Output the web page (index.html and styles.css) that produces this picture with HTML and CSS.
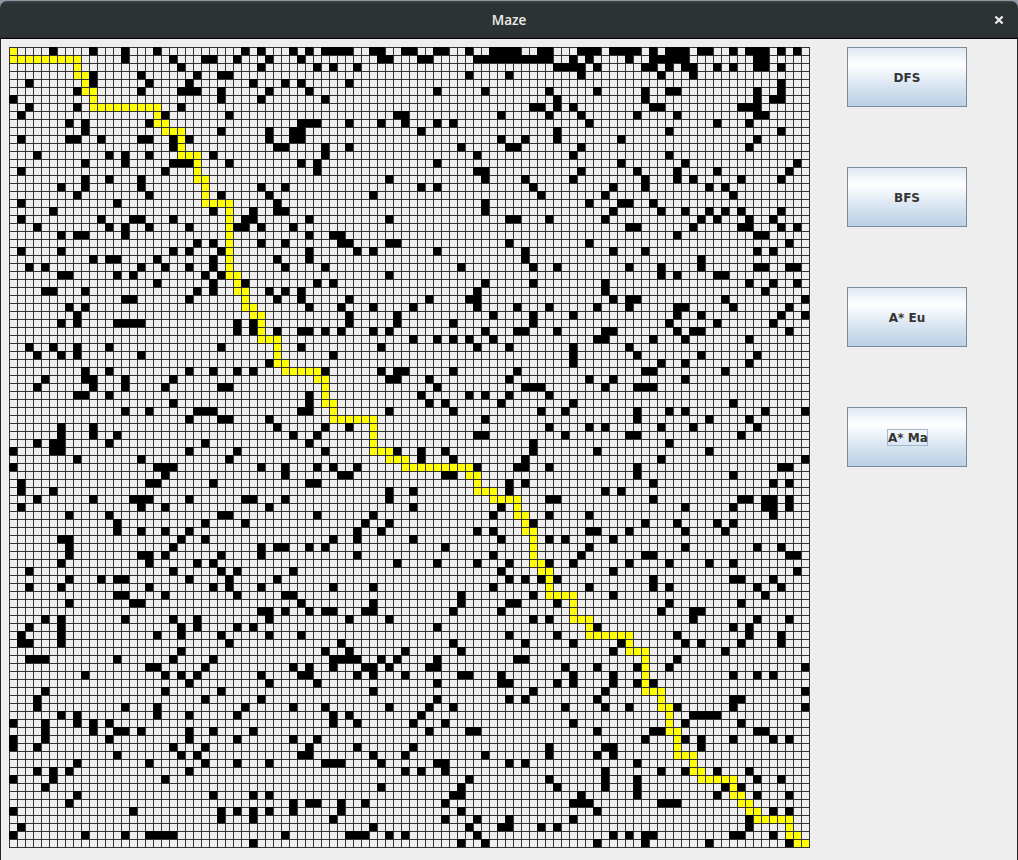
FILE: index.html
```html
<!DOCTYPE html>
<html lang="en">
<head>
<meta charset="utf-8">
<title>Maze</title>
<link rel="stylesheet" href="styles.css">
</head>
<body>
<div class="window">
  <header class="titlebar">
    <h1 class="title">Maze</h1>
    <button class="close" aria-label="Close">
      <svg width="10" height="10" viewBox="0 0 10 10"><path d="M1.4 1.4 8.6 8.6M8.6 1.4 1.4 8.6"/></svg>
    </button>
  </header>
  <main class="content">
    <svg class="maze" width="801" height="801" viewBox="0 0 801 801" shape-rendering="crispEdges">
      <path class="lines" id="lines"/>
      <path class="walls" id="walls"/>
      <path class="route" id="route"/>
    </svg>
    <div class="actions">
      <button class="btn"><span class="label">DFS</span></button>
      <button class="btn"><span class="label">BFS</span></button>
      <button class="btn"><span class="label">A* Eu</span></button>
      <button class="btn"><span class="label focused">A* Ma</span></button>
    </div>
  </main>
</div>
<script src="maze.js"></script>
</body>
</html>
```
FILE: styles.css
```css
body {
  margin: 0;
  background: #8f96a1;
  overflow: hidden;
}
.window {
  display: flex;
  flex-direction: column;
  box-sizing: border-box;
  width: 1018px;
  height: 860px;
  padding-top: 1px;
}
.titlebar {
  display: grid;
  grid-template-columns: 38px 1fr 38px;
  align-items: center;
  box-sizing: border-box;
  height: 38px;
  border-bottom: 1px solid #060404;
  border-radius: 7px 7px 0 0;
  background: linear-gradient(#3a4342 0, #2d3335 3px, #2d3234 34px, #272b2d 100%);
}
.title {
  grid-column: 2;
  margin: 0;
  text-align: center;
  font: 600 13.5px/20px "Open Sans", "Noto Sans", sans-serif;
  color: #eeeeec;
}
.close {
  display: flex;
  justify-content: center;
  padding: 0;
  border: 0;
  background: none;
}
.close path {
  fill: none;
  stroke: #eeeeec;
  stroke-width: 2.1;
}
.content {
  display: flex;
  flex: 1;
  gap: 37px;
  padding: 8px 0 0 8px;
  border-left: 1px solid #222627;
  border-right: 1px solid #222627;
  background: #eeeeee;
}
.maze {
  flex: none;
}
.lines {
  fill: none;
  stroke: #333333;
  stroke-width: 1;
}
.walls {
  fill: #000000;
}
.route {
  fill: #ffff00;
}
.actions {
  display: flex;
  flex-direction: column;
  gap: 60px;
}
.btn {
  display: flex;
  align-items: center;
  justify-content: center;
  box-sizing: border-box;
  width: 120px;
  height: 60px;
  padding: 1px 0 0;
  border: 1px solid #7a8a99;
  border-radius: 0;
  background: linear-gradient(#dde8f3 0, #ffffff 30%, #dde8f3 60%, #b8cfe5 100%) border-box;
  font: bold 12px/13px "DejaVu Sans", sans-serif;
  color: #333333;
}
.label {
  padding-top: 2px;
  border: 1px solid transparent;
}
.focused {
  width: 39px;
  margin-left: 1px;
  border-color: #a3b8cc;
  white-space: nowrap;
}
```
FILE: maze.js
```js
const SIZE = 100;
const CELL = 8;

// Wall columns by row, in blocks that begin at the given column and row.
const blocks = [
  [0, 0, "5,10,14,18,29,31|14,20,24-25,28,32|21,31|10,16,23,26-27|2,10,17,22,30|8,16,21-23,26,32|0,26,31|2,8,21|1,19,27|7,9,17|9,26,32|1,7-8,11,16-17,20,22,32|20,33|3,12,14,17,25|9,14,20-22,27|1,19|9,12,16|6,9,16,31|8,17,26,32|1,13,33|5,25,30,33|1,11,15-16,20,29-30|3,12,14,17,22,28-29,31|6,8-9,14|23,25,31|1,6,20,22,26|10,12-13,18,25,33|2,4,16,19,22,25|6-7,13,15,24,26|18,25,29|4-5,9,23,25,32|14-15,22,33|7,9"],
  [33, 0, "2,4,6-9,12-13,16-17,20-21,24,27-30,33|3,13-14,18-19,25-33|5,7,10|24,29|1,3,9|4,20,26|6|32-33|15-16,28|3-5,9,13,16,20,22|2-3,18|2-3,28,31|0-1,6,9,23,29-30|6,25|3,5,20|5,25-26|14,26,31|1,18,20,32|12,33|0,26|0-1,26|4,14,29-30|2|4,7-8|1,8-9,14-15,29|4,10,12,20,31|0,4,31|1,6,23,32|14|5,7,26,32|1,3,25|0,3,9,19,24-25|4,8,12,17,25,30"],
  [66, 0, "0-1,5-7,9-12,14,16-18,20-21,24,26-28,30,32|0-1,4,6,11,14-18,27-28|2-5,7,13-14,16,18-19,22,24,27-28,30|5,15,19|30|1,7,13,16-17,27,30|2,13,27,29-30|0,2,4,14-15,25-27|1,5,12,17,27-28|6,22,26|2,16,30|2,10,27|5,26|4,16|10,18,32|5,12,17,22,31|4,13,17,19,25,30|9,13,21,23|0,8,24|6,10-11,14|9,15,18,21,23,25,30|1,8,20,22,26,29|11-12,19,25-26,30,32|17,27-28|6,31|9,13,27,29|20|2,11,15,20,27-28,31-32|15,17,22-23|8,26,29,32|8,28|9,11-12,23,33|1,7,11,17-18,24,31"],
  [0, 33, "8|6,8,13-16,28,30|28,30,33||2,5,8,12,26|3,6,8,16|32|9,12,22,25,28,30|4,9-10,14,20|3,10,14,19,26-27|8-9,12|20|14,17,23-25|22,26-27,32|6,10,33|6,10,13|3,5-6,12,24|0,5-6,22,28|8,16,27|0,18-20,31|19|1,17-18,25|1,5|3,10,15-17,22,29-30|1,16,19,32|7,12,26-27|13,24,29|13,16,19,22|6-7,21,24|7,20,31,33|7,16-17,19,26,31|6,17,23,25|2,20,26,28"],
  [33, 33, "9,15,27,32|9,15,22,32|0,3-4,6,8,12,14,26,30-31|17,20,22,24,27|3,13,25,29|7||6,13,15-16,22,30|14-15,19,29|20,31-33|4,18,24,26,29|4,19,21,28|3-4,14,22,33|26|0,6,9|2,5,25-26|4,32|6,15,18,21,32|18,22,31|1,5,7,10,25,30-31|1,8-9,21-22|4-5,29,31|14,17,29|1,14|17,28|5,12,27|11,14,32|10,13,25,27|7,10,17,28|0-1,4,6,21|10,27|15,20,25,29|2,28"],
  [66, 33, "4,17,20,30,33|16,22,29|2,8-9,17,19-20,31|7-8,14,18,26|4,11|4,12,20,27|4,15,18,26|13-14,23|6,9,18|0,8,12-14|1|4,24|0,3,12,16,18,28,33|12,21,26|1,6,8,15,19,27|3,11-12,25|16|7,21|15,33|1,12,30-31|12,24|14,29,31|8,10|1-2,14,25-26,28-29,31|18,24,28-29,31|1,6,29|13,17,22,24|6-7,11,18,23|1,3,9|6,18,27,30|5,13-14,31-32|1,4,11,16,21,24|9,32"],
  [0, 66, "7,11,13-14,22,27,33|2,6,17,25,27,31|13-14,19,28|7,15-16|31-32|4,6,14,20,23,32|2,6,21,23,28,30|1,6,18,21,26,32|1-2,6,27|21|2-4,13,20,25|17-18,24|9,19,21,23,31|22,32|4,19,26|3,24,31|3,14,18,29|6,8,18,22,28|0,4,8,10,12|4,10,13-14,16,22,25,30|0,4,12,22,28|0,3,20,24|13,21,23|8,17,24,28,32|3,5,7,22|0,5,19|4|8,25,30,32|7|0,15,26,28,30,32|26,30|1|0,9,14,17-20|30"],
  [33, 66, "0,29,31,33|7,12,27|1-2,23,32|3,12,23,29-30|1,4,6-7,11-12,22,28|9,14,32|20|3,29|8,22,31|6,9,16,23|7-10,13,15,20,30-31|2,4,7,11-12,14,19-20|3-4,10,12,16,23-24,28|5,20,28-29|12,32|20,29,31|2,6,14,19,22|7,9,18|7,10,17,21|19,24-25|2,5|4,10,17|3-4,12,16,26|6-8,13,20-21,29,31|16,18,21|24|13,23|22-23|2,4-5,8,11,21|2,8,23|7,21,25,29|12,24,28-29,33|1,9-11,14,16,25|23,26"],
  [66, 66, "0,2,14,24-25,29|6,14,16,27,30|9,28|2,16,25|15,19-20|1,19,27,31|7,24,26|2,17,26,30|4,10,18,20,25,30|9,23|17|3,7,12,16,33|4,9,24,27,29|2,4,9,12,14|8,33|7,24-25|3,8,11,17,24,33|19-22|4,18,25|7,14-15,27-28|13,18,20,24,29,31|1,8-9,20|1,7,9|12|8,15,18,22,26|1,8,12,27,30|2,8,12,23,25|5,12,22,27,31|4-6,15-17|7,29,31|4,26|0,2,26|9,11,13-14,24-25,29|7,13,21,31"]
];

// Last column the route reaches in each row; it enters the next row there.
const routeEnds = [
  0, 8, 8, 9, 9, 10, 10, 18, 18, 19, 21, 21, 21, 23, 23, 23, 24, 24, 24, 27,
  27, 27, 27, 27, 27, 27, 27, 27, 28, 28, 29, 29, 30, 31, 31, 31, 33, 33, 33, 34,
  38, 39, 39, 39, 40, 40, 45, 45, 45, 45, 47, 49, 57, 58, 58, 60, 63, 63, 64, 64,
  65, 65, 65, 65, 66, 67, 67, 67, 70, 70, 70, 72, 72, 77, 77, 79, 79, 79, 79, 79,
  81, 81, 82, 82, 82, 83, 83, 83, 85, 85, 86, 90, 90, 91, 92, 93, 97, 97, 98, 99
];

let lines = "";
for (let i = 0; i <= SIZE; i++) {
  const p = i * CELL + 0.5;
  lines += `M${p} 0V801M0 ${p}H801`;
}
document.getElementById("lines").setAttribute("d", lines);

let walls = "";
for (const [col, row, data] of blocks) {
  data.split("|").forEach((line, r) => {
    if (!line) return;
    for (const part of line.split(",")) {
      const [from, to = from] = part.split("-").map(Number);
      const w = (to - from + 1) * CELL;
      walls += `M${(col + from) * CELL} ${(row + r) * CELL}h${w}v${CELL}h${-w}z`;
    }
  });
}
document.getElementById("walls").setAttribute("d", walls);

let route = "";
let start = 0;
routeEnds.forEach((end, row) => {
  for (let c = start; c <= end; c++) {
    route += `M${c * CELL + 1} ${row * CELL + 1}h7v7h-7z`;
  }
  start = end;
});
document.getElementById("route").setAttribute("d", route);
```
